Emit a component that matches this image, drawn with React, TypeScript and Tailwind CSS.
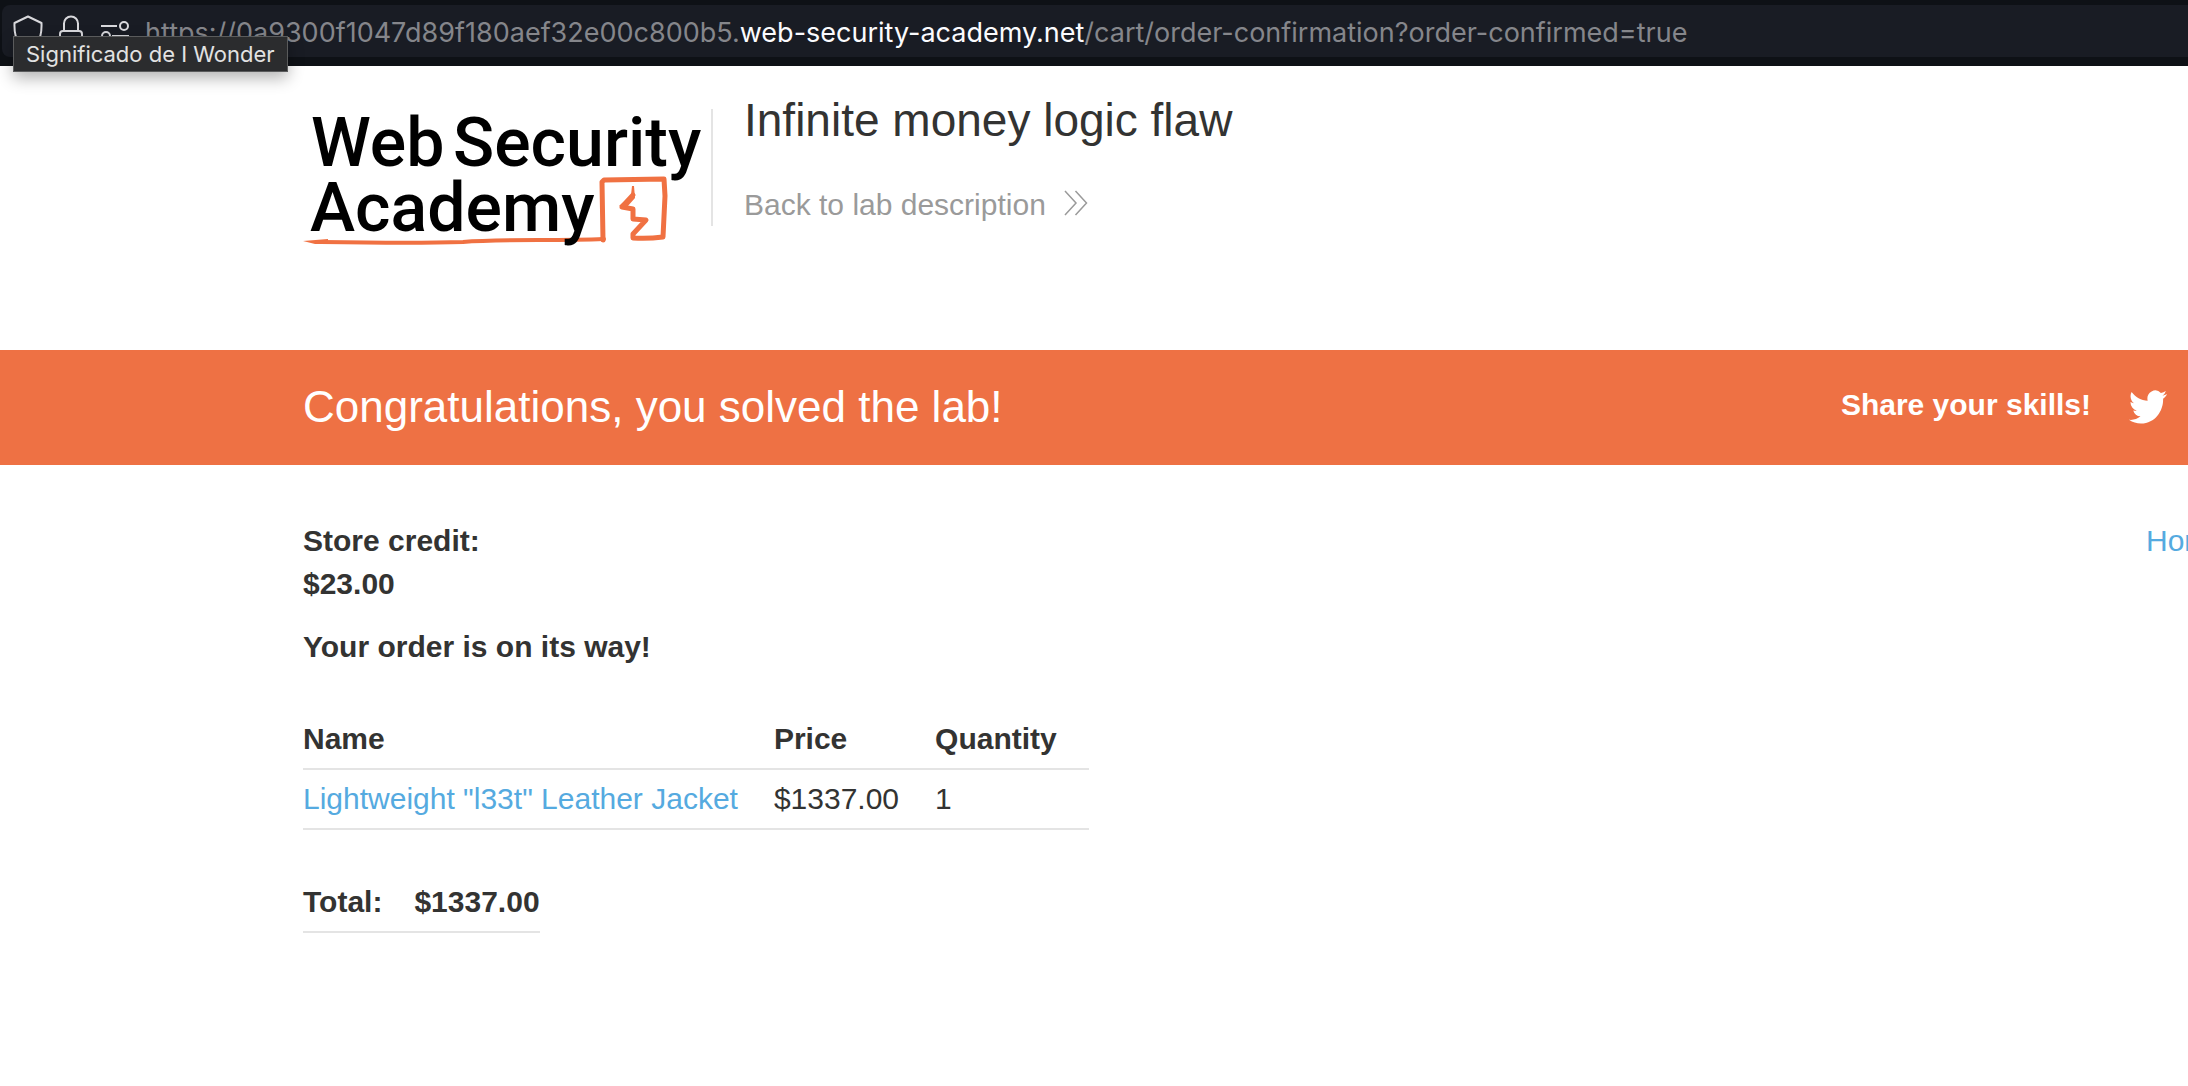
import React from "react";

function ShieldIcon() {
  return (
    <svg width="30" height="32" viewBox="0 0 30 32" fill="none" stroke="#d8d8dc" strokeWidth="2" strokeLinejoin="round" aria-hidden="true">
      <path d="M15 1.500 L28.500 8 Q29 22 24 27 Q20 30 15 31 Q10 30 6 27 Q1 22 1.500 8 Z" />
    </svg>
  );
}

function LockIcon() {
  return (
    <svg width="24" height="32" viewBox="0 0 24 32" fill="none" stroke="#d8d8dc" strokeWidth="2" aria-hidden="true">
      <path d="M5 16 V8.500 a7 7 0 0 1 14 0 V16" />
      <rect x="1" y="16" width="22" height="15" rx="3" />
    </svg>
  );
}

function PermissionsIcon() {
  return (
    <svg width="28" height="24" viewBox="0 0 28 24" fill="none" stroke="#d8d8dc" strokeWidth="2" aria-hidden="true">
      <path d="M0 7 H16 M11 17 H28" />
      <circle cx="23" cy="7" r="4" />
      <circle cx="5" cy="17" r="4" />
    </svg>
  );
}

function AddressBar() {
  return (
    <header className="relative h-[66px] bg-[#0e1116] pl-0.5 pt-[5px] font-[Inter,sans-serif]">
      <div className="flex h-[52px] items-center overflow-hidden rounded-l-lg bg-[#191c24] pl-[11px]">
        <button aria-label="Tracking protection"><ShieldIcon /></button>
        <button aria-label="Connection security" className="ml-4"><LockIcon /></button>
        <button aria-label="Permissions" className="ml-[18px]"><PermissionsIcon /></button>
        <p className="ml-4 whitespace-nowrap pt-1 text-[27px] leading-[36px] text-[#85868b]">
          https://0a9300f1047d89f180aef32e00c800b5.
          <span className="text-[#fbfbfe]">web-security-academy.net</span>
          /cart/order-confirmation?order-confirmed=true
        </p>
      </div>
      <div role="tooltip" className="absolute left-[13px] top-9 flex h-9 items-center border border-[#5a5b5c] bg-[#2b2c2e] px-3 text-[22px] leading-7 text-[#e2e2e2] shadow-[0_6px_16px_rgba(0,0,0,0.3)] whitespace-nowrap">
        Significado de I Wonder
      </div>
    </header>
  );
}

function AcademyLogo() {
  return (
    <svg width="402" height="150" viewBox="0 0 402 150" role="img" aria-label="Web Security Academy" className="shrink-0">
      <g fill="none" stroke="#f07142" strokeLinejoin="round" strokeLinecap="round">
        <path strokeWidth="5" d="M300 142 L299 84 L301 82 L361 81 L362 98 L360 139 Q345 141 330 140 L330 136 L343 122 L330 121 L330 111 L319 109 L330 97" />
        <path strokeWidth="4" d="M18 144 C80 145 130 145 160 144 C200 141 250 143 301 141" />
      </g>
      <path fill="#f07142" d="M0 143 L25 141 L25 146 L12 146 Z M316 108 L328 97 L329 88 L331 88 L332 100 L324 109 Z" />
      <g fill="#000000" fontFamily="Roboto, sans-serif" fontWeight="500" fontSize="68">
        <text x="8" y="68">Web</text>
        <text x="150" y="68">Security</text>
        <text x="7" y="133">Academy</text>
      </g>
    </svg>
  );
}

function LabHeader() {
  return (
    <section className="flex h-[284px] items-start pl-[303px] pt-[32px]">
      <AcademyLogo />
      <div className="ml-1.5 mt-[11px] h-[117px] w-0.5 shrink-0 bg-[#e4e4e4]" />
      <div className="ml-[31px] -mt-[6px]">
        <h2 className="text-[46px] leading-[56px]">Infinite money logic flaw</h2>
        <a href="#lab" className="mt-9 flex items-center text-[30px] leading-[42px] text-[#9a9a9a]">
          Back to lab description
          <svg className="mb-1 ml-[18px]" width="24" height="26" viewBox="0 0 24 26" fill="none" stroke="#9a9a9a" strokeWidth="1.500" aria-hidden="true">
            <path d="M1 1 L12 13 L1 25 M11.500 1 L22.500 13 L11.500 25" />
          </svg>
        </a>
      </div>
    </section>
  );
}

function SolvedBanner() {
  return (
    <section className="flex h-[115px] items-center justify-between bg-[#ee7144] pl-[303px] pr-[21px] text-white">
      <h4 className="pb-0.5 text-[44px] leading-[54px]">Congratulations, you solved the lab!</h4>
      <div className="flex items-center gap-[38px]">
        <span className="pb-1.5 text-[30px] font-bold leading-[42px]">Share your skills!</span>
        <a href="#twitter" aria-label="Share on Twitter" className="pb-0.5">
          <svg width="38" height="34" viewBox="0 2 24 20" preserveAspectRatio="none" fill="currentColor" aria-hidden="true">
            <path d="M23.953 4.570a10 10 0 0 1-2.825.775 4.958 4.958 0 0 0 2.163-2.723c-.951.555-2.005.959-3.127 1.184a4.920 4.920 0 0 0-8.384 4.482C7.690 8.095 4.067 6.130 1.640 3.162a4.822 4.822 0 0 0-.666 2.475c0 1.710.870 3.213 2.188 4.096a4.904 4.904 0 0 1-2.228-.616v.060a4.923 4.923 0 0 0 3.946 4.827 4.996 4.996 0 0 1-2.212.085 4.936 4.936 0 0 0 4.604 3.417 9.867 9.867 0 0 1-6.102 2.105c-.390 0-.779-.023-1.170-.067a13.995 13.995 0 0 0 7.557 2.209c9.053 0 13.998-7.496 13.998-13.985 0-.210 0-.420-.015-.630A9.935 9.935 0 0 0 24 4.590z" />
          </svg>
        </a>
      </div>
    </section>
  );
}

const items = [{ name: 'Lightweight "l33t" Leather Jacket', price: "$1337.00", quantity: 1 }];

function Order() {
  return (
    <main className="pl-[303px] pt-[54px]">
      <div className="flex items-start justify-between">
        <p className="font-bold leading-[43px]">
          Store credit:
          <br />
          $23.00
        </p>
        <nav className="w-[42px] overflow-hidden whitespace-nowrap leading-[43px]">
          <a href="#home" className="text-[#55aae0]">Home</a>
        </nav>
      </div>
      <h4 className="mt-5 font-bold leading-[43px]">Your order is on its way!</h4>
      <table className="mt-[42px] border-collapse text-left leading-[42px]">
        <thead>
          <tr className="border-b-2 border-[#e4e4e4]">
            <th className="py-2 pr-9">Name</th>
            <th className="py-2 pr-9">Price</th>
            <th className="py-2 pr-8">Quantity</th>
          </tr>
        </thead>
        <tbody>
          {items.map((item) => (
            <tr key={item.name} className="border-b-2 border-[#e4e4e4]">
              <td className="py-2 pr-9"><a href="#product" className="text-[#55aae0]">{item.name}</a></td>
              <td className="py-2 pr-9">{item.price}</td>
              <td className="py-2 pr-8">{item.quantity}</td>
            </tr>
          ))}
        </tbody>
      </table>
      <table className="mt-[43px] border-collapse text-left leading-[42px]">
        <tbody>
          <tr className="border-b-2 border-[#e4e4e4]">
            <th className="py-2 pr-8">Total:</th>
            <th className="py-2">$1337.00</th>
          </tr>
        </tbody>
      </table>
    </main>
  );
}

export default function App() {
  return (
    <div className="min-h-screen overflow-hidden bg-white font-['Liberation_Sans',Arial,sans-serif] text-[30px] text-[#333332]">
      <AddressBar />
      <LabHeader />
      <SolvedBanner />
      <Order />
    </div>
  );
}
